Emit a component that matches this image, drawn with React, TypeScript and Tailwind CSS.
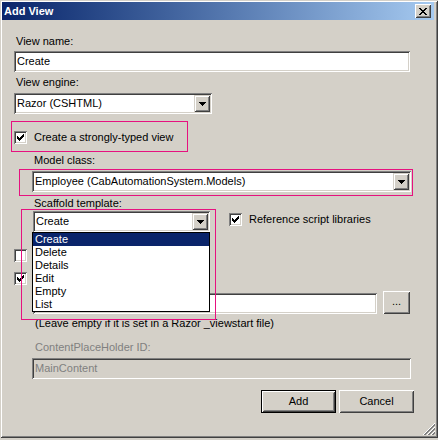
import React from "react";

const sunken =
  "shadow-[inset_1px_1px_#808080,inset_-1px_-1px_#ffffff,inset_2px_2px_#404040,inset_-2px_-2px_#d4d0c8]";
const raised =
  "shadow-[inset_1px_1px_#ffffff,inset_-1px_-1px_#404040,inset_2px_2px_#d4d0c8,inset_-2px_-2px_#808080]";
const comboBtn =
  "shadow-[inset_1px_1px_#d4d0c8,inset_-1px_-1px_#404040,inset_2px_2px_#ffffff,inset_-2px_-2px_#808080]";
// the magenta annotation frames drawn over the screenshot
const pink = "shadow-[inset_0_0_0_1px_#e6117f]";

function Arrow() {
  return (
    <svg width="7" height="4" shapeRendering="crispEdges">
      <rect x="0" y="0" width="7" height="1" fill="#000" />
      <rect x="1" y="1" width="5" height="1" fill="#000" />
      <rect x="2" y="2" width="3" height="1" fill="#000" />
      <rect x="3" y="3" width="1" height="1" fill="#000" />
    </svg>
  );
}

function CheckMark() {
  // classic 7x7 tick
  const rows: [number, number][][] = [
    [[6, 1]],
    [[5, 2]],
    [[0, 1], [4, 3]],
    [[0, 2], [3, 3]],
    [[0, 5]],
    [[1, 3]],
    [[2, 1]],
  ];
  return (
    <svg width="7" height="7" shapeRendering="crispEdges">
      {rows.map((r, y) =>
        r.map(([x, w]) => <rect key={y + "-" + x} x={x} y={y} width={w} height="1" fill="#000" />)
      )}
    </svg>
  );
}

function Checkbox({ checked }: { checked?: boolean }) {
  return (
    <div className={`w-[13px] h-[13px] shrink-0 bg-white flex items-center justify-center ${sunken}`}>
      {checked && <CheckMark />}
    </div>
  );
}

function Combo({ value, className }: { value: string; className: string }) {
  return (
    <div className={`h-[21px] bg-white flex items-center p-[2px] ${sunken} ${className}`}>
      <span className="flex-1 pl-[1px] truncate">{value}</span>
      <div className={`w-[16px] h-[17px] bg-[#d4d0c8] flex items-center justify-center ${comboBtn}`}>
        <Arrow />
      </div>
    </div>
  );
}

function TextBox({ value, className }: { value?: string; className: string }) {
  return (
    <div className={`h-[21px] flex items-center pl-[3px] ${sunken} ${className}`}>{value}</div>
  );
}

function Button({ label, isDefault }: { label: string; isDefault?: boolean }) {
  return (
    <div
      className={`w-[75px] h-[23px] flex items-center justify-center ${
        isDefault ? "border border-black" : ""
      }`}
    >
      <div className={`w-full h-full flex items-center justify-center ${raised}`}>{label}</div>
    </div>
  );
}

const scaffolds = ["Create", "Delete", "Details", "Edit", "Empty", "List"];

export default function App() {
  return (
    <div className="w-[438px] h-[440px] bg-[#d4d0c8] font-['Liberation_Sans',Arial,sans-serif] text-[11px] leading-[13px] text-black">
      <div className="relative w-[438px] h-[438px] bg-[#d4d0c8] flex flex-col shadow-[inset_1px_1px_#d4d0c8,inset_-1px_-1px_#404040,inset_2px_2px_#ffffff,inset_-2px_-2px_#808080]">
        {/* title bar */}
        <div className="mt-[2px] ml-[2px] w-[432px] h-[18px] flex items-center bg-gradient-to-r from-[#0a246a] to-[#a6caf0]">
          <span className="pl-[2px] flex-1 text-white font-bold leading-[18px]">Add View</span>
          <div className={`w-[16px] h-[14px] mr-[3px] bg-[#d4d0c8] flex items-center justify-center ${raised}`}>
            <svg width="8" height="7" shapeRendering="crispEdges">
              {[
                [0, 2, 6, 2],
                [1, 2, 5, 2],
                [2, 4, 0, 0],
                [3, 2, 0, 0],
                [2, 4, 0, 0],
                [1, 2, 5, 2],
                [0, 2, 6, 2],
              ].map(([a, aw, b, bw], y) => (
                <g key={y}>
                  <rect x={a} y={y} width={aw} height="1" fill="#000" />
                  {bw > 0 && <rect x={b} y={y} width={bw} height="1" fill="#000" />}
                </g>
              ))}
            </svg>
          </div>
        </div>

        {/* body */}
        <div className="flex flex-col">
          <div className="mt-[15px] ml-[16px]">View name:</div>
          <TextBox value="Create" className="mt-[3px] ml-[14px] w-[396px] bg-white" />
          <div className="mt-[4px] ml-[16px]">View engine:</div>
          <Combo value="Razor (CSHTML)" className="mt-[4px] ml-[14px] w-[198px]" />

          <div className={`mt-[7px] ml-[11px] w-[177px] h-[31px] flex items-center pl-[3px] pt-[2px] ${pink}`}>
            <Checkbox checked />
            <span className="ml-[7px]">Create a strongly-typed view</span>
          </div>

          <div className="mt-[2px] ml-[34px]">Model class:</div>
          <div className={`mt-[2px] ml-[19px] w-[394px] h-[27px] pl-[13px] pt-[2px] ${pink}`}>
            <Combo value="Employee (CabAutomationSystem.Models)" className="w-[379px]" />
          </div>

          <div className="mt-[1px] ml-[34px]">Scaffold template:</div>
          <div className="mt-[1px] flex items-start">
            <Combo value="Create" className="ml-[33px] w-[177px]" />
            <div className="ml-[19px] mt-[2px] flex items-center">
              <Checkbox checked />
              <span className="ml-[7px]">Reference script libraries</span>
            </div>
          </div>

          {/* these two rows sit under the open list; their labels are hidden */}
          <div className="mt-[17px] ml-[14px] h-[13px] flex items-center">
            <Checkbox />
          </div>
          <div className="mt-[10px] ml-[14px] h-[13px] flex items-center">
            <Checkbox checked />
          </div>

          <div className="mt-[6px] ml-[33px] flex items-end">
            <TextBox className="w-[344px] bg-white" />
            <div className="ml-[6px]">
              <div className={`w-[27px] h-[23px] flex items-center justify-center pb-[3px] ${raised}`}>...</div>
            </div>
          </div>

          <div className="mt-[3px] ml-[35px]">(Leave empty if it is set in a Razor _viewstart file)</div>
          <div className="mt-[11px] ml-[35px] text-[#808080]">ContentPlaceHolder ID:</div>
          <TextBox value="MainContent" className="mt-[4px] ml-[32px] w-[379px] bg-[#d4d0c8] text-[#808080]" />

          <div className="mt-[11px] ml-[261px] flex gap-[3px]">
            <Button label="Add" isDefault />
            <Button label="Cancel" />
          </div>
        </div>

        {/* scaffold dropdown (open) */}
        <div className="absolute left-[32px] top-[232px] w-[178px] border border-black bg-white">
          {scaffolds.map((s, i) => (
            <div
              key={s}
              className={`h-[13px] pl-[2px] leading-[13px] ${i === 0 ? "bg-[#0a246a] text-white" : ""}`}
            >
              {s}
            </div>
          ))}
        </div>
        {/* highlight annotation */}
        <div className={`absolute left-[21px] top-[209px] w-[195px] h-[111px] ${pink}`} />

        {/* size grip */}
        <svg
          className="absolute right-[3px] bottom-[3px]"
          width="12"
          height="12"
          shapeRendering="crispEdges"
        >
          {[0, 4, 8].map((k) => (
            <g key={k}>
              <line x1={k} y1="12" x2="12" y2={k} stroke="#ffffff" strokeWidth="1" />
              <line x1={k + 1} y1="12" x2="12" y2={k + 1} stroke="#808080" strokeWidth="1" />
              <line x1={k + 2} y1="12" x2="12" y2={k + 2} stroke="#808080" strokeWidth="1" />
            </g>
          ))}
        </svg>
      </div>
    </div>
  );
}
